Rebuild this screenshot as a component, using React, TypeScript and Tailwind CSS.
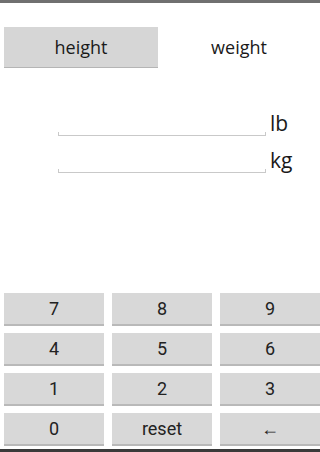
import React from "react";

const KEYS = ["7", "8", "9", "4", "5", "6", "1", "2", "3", "0", "reset", "←"];

function Field({ unit }: { unit: string }) {
  return (
    <div className="flex items-end h-[26px]">
      <div className="ml-[58px] w-[208px] h-[4px] border-x border-b border-[#c9c9c9]" />
      <span
        className="ml-[4px] text-[21px] leading-[26px] text-[#1a1a1a] mb-[0px]"
        style={{ fontFamily: "'Open Sans', sans-serif" }}
      >
        {unit}
      </span>
    </div>
  );
}

export default function App() {
  return (
    <div
      className="w-[320px] h-[452px] bg-white flex flex-col overflow-hidden"
      style={{ fontFamily: "Roboto, 'Liberation Sans', sans-serif" }}
    >
      {/* clipped title bar */}
      <div className="h-[3px] bg-[#707070]" />

      {/* tabs */}
      <div
        className="flex gap-[4px] px-[4px] mt-[24px]"
        style={{ fontFamily: "'Open Sans', sans-serif" }}
      >
        <button className="w-[154px] h-[41px] bg-[#d6d6d6] border-b border-[#b5b5b5] text-[18px] text-[#1a1a1a]">
          height
        </button>
        <button className="w-[154px] h-[41px] text-[18px] text-[#1a1a1a]">weight</button>
      </div>

      {/* inputs */}
      <div className="flex flex-col gap-[11px] mt-[42px]">
        <Field unit="lb" />
        <Field unit="kg" />
      </div>

      {/* keypad */}
      <div className="mt-auto grid grid-cols-[100px_100px_100px] gap-x-[8px] gap-y-[7px] pl-[4px] pb-[3px]">
        {KEYS.map((k) => (
          <button
            key={k}
            className="h-[33px] bg-[#d8d8d8] border-b-2 border-[#b9b9b9] text-[18px] text-[#222]"
          >
            {k}
          </button>
        ))}
      </div>
      <div className="h-[3px] bg-[#3a3a3a]" />
    </div>
  );
}
